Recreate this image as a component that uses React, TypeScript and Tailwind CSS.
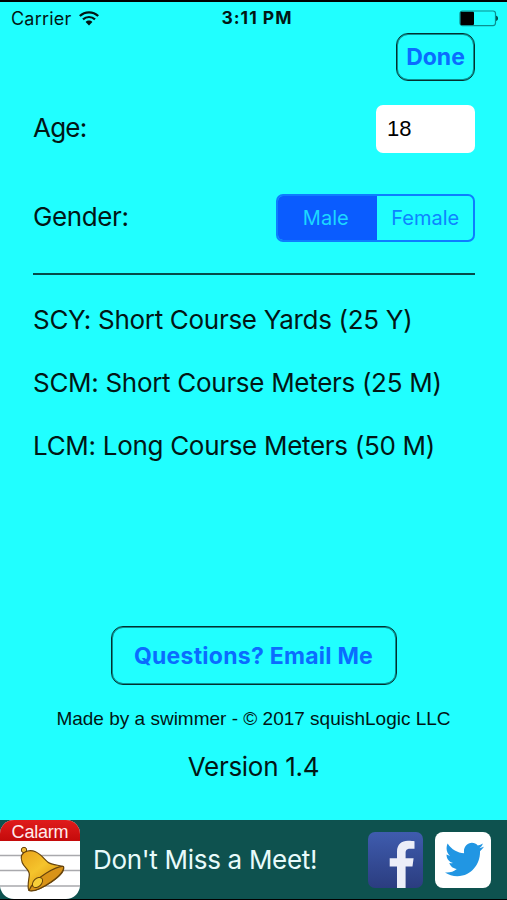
import { useState } from "react";

const COURSES = [
  "SCY: Short Course Yards (25 Y)",
  "SCM: Short Course Meters (25 M)",
  "LCM: Long Course Meters (50 M)",
];

const GENDERS = ["Male", "Female"];

function WifiIcon() {
  return (
    <svg width="20" height="15" viewBox="0 0 20 15" fill="none">
      <path d="M.8 5C6 .1 14 .1 19.200 5" stroke="#021615" strokeWidth="2.300" />
      <path d="M4 8.400c3.400-3.200 8.600-3.200 12 0" stroke="#021615" strokeWidth="2.200" />
      <path d="M6.600 11c2-1.900 4.800-1.900 6.800 0L10 14.500z" fill="#021615" />
    </svg>
  );
}

function BatteryIcon() {
  return (
    <svg width="40" height="17" viewBox="0 0 40 17" fill="none">
      <rect x="1" y="1" width="35.500" height="14.600" rx="2.500" stroke="#0b8f8f" strokeWidth="1.200" />
      <rect x="1.500" y="1.800" width="13.500" height="13.200" rx="1" fill="#000" />
      <path d="M37.200 5.800c2.300.6 2.300 4.600 0 5.200z" fill="#033" />
    </svg>
  );
}

function CalarmIcon() {
  return (
    <div className="flex h-[79px] w-20 flex-col overflow-hidden rounded-[14px] bg-white">
      <div className="flex h-[21px] items-center justify-center bg-linear-to-b from-[#e01b1b] to-[#c40a0a] pt-[3px] font-['Liberation_Sans',sans-serif] text-[18px] leading-[18px] tracking-[-0.2px] text-[#ffecec]">
        Calarm
      </div>
      <svg width="80" height="58" viewBox="0 0 80 58" fill="none">
        <defs>
          <linearGradient id="bell" x1="20" y1="10" x2="50" y2="50" gradientUnits="userSpaceOnUse">
            <stop stopColor="#e9a21b" />
            <stop offset=".5" stopColor="#f5c42c" />
            <stop offset="1" stopColor="#d88d10" />
          </linearGradient>
        </defs>
        <path d="M0 14.500h80M0 29.500h80M0 45h80" stroke="#a9a9ad" strokeWidth="1.500" />
        <circle cx="24" cy="9" r="2.700" fill="#eebb35" stroke="#66430c" />
        <path
          d="M21.500 14.500c2.500-4.800 9-6 14-3.700 6 2.800 9 7.700 12.500 10.400 3.500 2.700 10.500 2.800 15.500 4.300 1.500 5-4.500 10.500-12 15.500S34 51.500 29 49.500c-2-2.500-.5-9 .3-15S24.200 27 22.200 21.500c-.9-2.500-1.400-5-.7-7z"
          fill="url(#bell)"
          stroke="#66430c"
          strokeWidth="1.200"
        />
        <path
          d="M63.500 25.500C58 24.500 34 36.500 29 49.500c5 1.500 14-3 22-8.500s13.500-10.500 12.500-15.500z"
          fill="#d99318"
          stroke="#66430c"
          strokeWidth="1.100"
        />
        <ellipse cx="37.500" cy="41.500" rx="6" ry="4" transform="rotate(-45 37.500 41.500)" fill="#f7ce38" stroke="#66430c" />
      </svg>
    </div>
  );
}

function FacebookIcon() {
  return (
    <div className="h-14 w-[55px] overflow-hidden rounded-[7px] bg-linear-to-b from-[#3f5cae] to-[#2b3d80]">
      <svg width="55" height="56" viewBox="0 0 55 56">
        <path
          d="M29 56V34.500H21.700v-8.300H29V19.500c0-6.800 4.500-10.700 11-10.700 2.700 0 5.200.2 6.500.5v7.500h-4.400c-3.400 0-4.500 1.600-4.500 4v5.400h8l-1.100 8.300h-6.900V56z"
          fill="#eceef8"
        />
      </svg>
    </div>
  );
}

function TwitterIcon() {
  return (
    <div className="flex h-14 w-14 items-center justify-center rounded-[8px] bg-white pl-[3px]">
      <svg width="39" height="41" viewBox="0 0 24 24" preserveAspectRatio="none">
        <path
          d="M23.954 4.569c-.885.389-1.830.654-2.825.775 1.014-.611 1.794-1.574 2.163-2.723-.951.555-2.005.959-3.127 1.184-.896-.959-2.173-1.559-3.591-1.559-2.717 0-4.920 2.203-4.920 4.917 0 .390.045.765.127 1.124C7.691 8.094 4.066 6.130 1.640 2.600c-.427.722-.666 1.900-.666 3.036 0 1.710.870 3.213 2.188 4.096-.807-.026-1.566-.248-2.228-.616v.061c0 2.385 1.693 4.374 3.946 4.827-.413.111-.849.171-1.296.171-.314 0-.615-.030-.916-.086.631 1.953 2.445 3.377 4.604 3.417-1.680 1.319-3.809 2.105-6.102 2.105-.390 0-.779-.023-1.170-.067 2.189 1.394 4.768 2.209 7.557 2.209 9.054 0 13.999-7.496 13.999-13.986 0-.209 0-.420-.015-.630.961-.689 1.800-1.560 2.460-2.548z"
          fill="#2196e3"
        />
      </svg>
    </div>
  );
}

export default function App() {
  const [gender, setGender] = useState("Male");
  const [age, setAge] = useState("18");

  return (
    <div className="flex h-[900px] w-[507px] flex-col border-t-2 border-b border-black bg-[#20ffff] font-['Inter',sans-serif] whitespace-nowrap text-[#021615]">
      <div className="grid h-[31px] grid-cols-3 items-center pt-px pr-2 pl-[11px]">
        <div className="flex items-center gap-2">
          <span className="text-[18px] tracking-[0.2px]">Carrier</span>
          <WifiIcon />
        </div>
        <div className="pl-1 text-center text-[17.500px] font-bold tracking-[1px]">3:11 PM</div>
        <div className="flex justify-end">
          <BatteryIcon />
        </div>
      </div>

      <div className="flex flex-col pr-8 pl-[33px]">
        <button className="h-12 w-[79px] self-end rounded-[12px] border border-[#03302f] pt-px text-[23px] font-bold text-[#0a6cff] shadow-[inset_0_0_0_1px_#0b9090]">
          Done
        </button>

        <div className="mt-6 flex h-12 items-center justify-between">
          <label className="pb-[3px] text-[26px] tracking-[-0.8px]">Age:</label>
          <input
            value={age}
            onChange={(e) => setAge(e.target.value)}
            className="h-12 w-[99px] rounded-[7px] bg-white px-[11px] font-['Liberation_Sans',sans-serif] text-[22px] text-black"
          />
        </div>

        <div className="mt-[41px] flex h-12 items-center justify-between">
          <span className="pb-[3px] text-[26px] tracking-[-0.4px]">Gender:</span>
          <div className="flex h-12 w-[199px] overflow-hidden rounded-[7px] border-2 border-[#0d7dff]">
            {GENDERS.map((g) => (
              <button
                key={g}
                onClick={() => setGender(g)}
                className={`flex-1 text-[20px] ${
                  gender === g ? "bg-[#0a5cff] pr-[3px] text-[#1cd8ff]" : "pl-px text-[#0d84ff]"
                }`}
              >
                {g}
              </button>
            ))}
          </div>
        </div>

        <div className="mt-[31px] h-[2px] bg-[#064a49]" />

        <div className="mt-[13px] flex flex-col">
          {COURSES.map((course) => (
            <p key={course} className="h-[63px] text-[26px] leading-[63px] tracking-[-0.3px]">
              {course}
            </p>
          ))}
        </div>
      </div>

      <div className="mt-auto flex flex-col items-center">
        <button className="h-[59px] w-[286px] rounded-[12px] border border-[#03302f] pt-px text-[23px] font-bold tracking-[0.25px] text-[#0a6cff] shadow-[inset_0_0_0_1px_#0b9090]">
          Questions? Email Me
        </button>
        <p className="mt-[21px] font-['Liberation_Sans',sans-serif] text-[19px] leading-[26px]">
          Made by a swimmer - © 2017 squishLogic LLC
        </p>
        <p className="mt-[19px] text-[26px] leading-8 tracking-[-0.3px]">Version 1.4</p>
      </div>

      <div className="mt-[37px] flex h-[79px] shrink-0 items-center bg-[#0e524f]">
        <CalarmIcon />
        <span className="ml-[13px] text-[26px] tracking-[-0.3px] text-[#e8fbfb]">Don't Miss a Meet!</span>
        <div className="mr-4 ml-auto flex gap-3">
          <FacebookIcon />
          <TwitterIcon />
        </div>
      </div>
    </div>
  );
}
